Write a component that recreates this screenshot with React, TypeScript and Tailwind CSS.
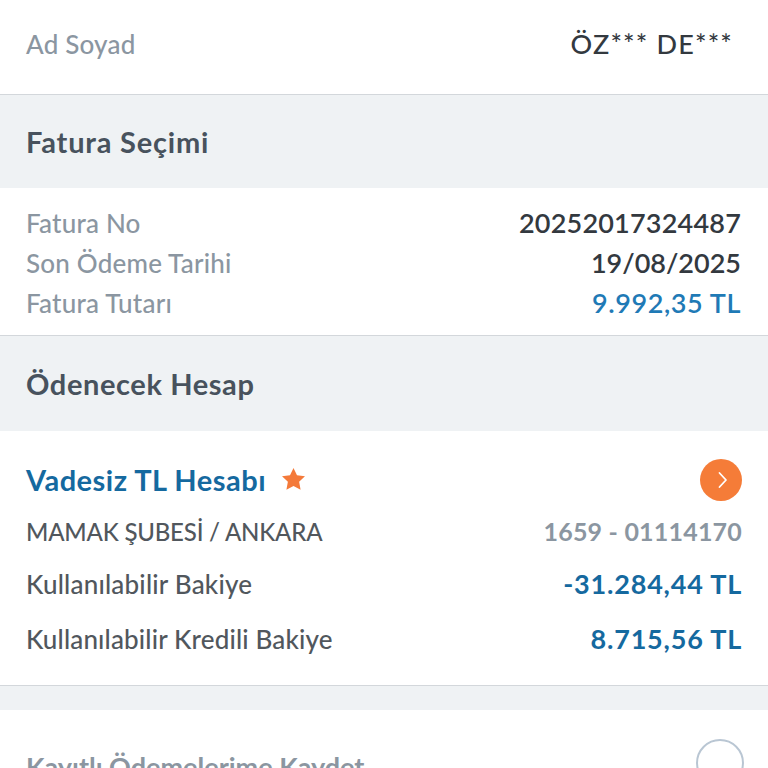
export default function App() {
  return (
    <div className="min-h-[768px] w-full bg-white font-['Lato',sans-serif]">
      {/* customer */}
      <div className="flex h-[95px] items-center justify-between border-b border-[#d3d7db] pb-[5px] pl-[26px] pr-[35px]">
        <span className="text-[26px] font-medium tracking-[0.2px] text-[#8b96a1]">Ad Soyad</span>
        <span className="text-[27px] font-medium tracking-[1.2px] text-[#33393f]">ÖZ*** DE***</span>
      </div>

      {/* invoice */}
      <div className="flex h-[93px] items-center bg-[#eff2f4] px-[26px]">
        <h2 className="text-[29px] font-bold tracking-[0.8px] text-[#48525d]">Fatura Seçimi</h2>
      </div>
      <div className="border-b border-[#d3d7db] pt-[15px] pb-[12px] pl-[26px] pr-[27px]">
        <div className="flex h-[40px] items-center justify-between">
          <span className="text-[26px] font-medium tracking-[0.2px] text-[#8b96a1]">Fatura No</span>
          <span className="text-[27px] font-semibold tracking-[0.2px] text-[#33393f]">20252017324487</span>
        </div>
        <div className="flex h-[40px] items-center justify-between">
          <span className="text-[26px] font-medium tracking-[0.2px] text-[#8b96a1]">Son Ödeme Tarihi</span>
          <span className="text-[27px] font-semibold text-[#33393f]">19/08/2025</span>
        </div>
        <div className="flex h-[40px] items-center justify-between">
          <span className="text-[26px] font-medium tracking-[0.2px] text-[#8b96a1]">Fatura Tutarı</span>
          <span className="text-[27px] font-semibold tracking-[0.6px] text-[#1f7ab6]">9.992,35 TL</span>
        </div>
      </div>

      {/* account */}
      <div className="flex h-[95px] items-center bg-[#eff2f4] px-[26px]">
        <h2 className="text-[29px] font-bold tracking-[0.6px] text-[#48525d]">Ödenecek Hesap</h2>
      </div>
      <div className="border-b border-[#d3d7db] pt-[28px] pb-[31px] pl-[26px] pr-[26px]">
        <div className="flex h-[42px] items-center justify-between">
          <div className="flex items-center gap-[14px]">
            <span className="text-[29px] font-bold tracking-[0.5px] text-[#15699f]">Vadesiz TL Hesabı</span>
            <svg width="27" height="27" viewBox="0 0 24 24" className="-mt-[2px]">
              <path
                d="M12 1.8l3.1 6.5 7.1.9-5.2 4.9 1.3 7.1L12 17.8l-6.3 3.4 1.3-7.1L1.8 9.2l7.1-.9z"
                fill="#f47a3a"
              />
            </svg>
          </div>
          <button className="flex h-[42px] w-[42px] items-center justify-center rounded-full bg-[#f57c38]">
            <svg width="24" height="24" viewBox="0 0 24 24" fill="none" className="ml-[2px]">
              <path d="M9.5 5l6.5 7-6.5 7" stroke="#fff" strokeWidth="1.8" strokeLinecap="round" strokeLinejoin="round" />
            </svg>
          </button>
        </div>
        <div className="mt-[16px] flex h-[30px] items-center justify-between">
          <span className="text-[24px] font-medium tracking-[-0.2px] text-[#51575d]">MAMAK ŞUBESİ / ANKARA</span>
          <span className="text-[25px] font-bold tracking-[0.2px] text-[#8b96a1]">1659 - 01114170</span>
        </div>
        <div className="mt-[22px] flex h-[30px] items-center justify-between">
          <span className="text-[26px] font-medium tracking-[0.2px] text-[#51575d]">Kullanılabilir Bakiye</span>
          <span className="text-[27px] font-bold tracking-[0.8px] text-[#15699f]">-31.284,44 TL</span>
        </div>
        <div className="mt-[25px] flex h-[30px] items-center justify-between">
          <span className="text-[26px] font-medium tracking-[0.15px] text-[#51575d]">Kullanılabilir Kredili Bakiye</span>
          <span className="text-[27px] font-bold tracking-[0.8px] text-[#15699f]">8.715,56 TL</span>
        </div>
      </div>

      <div className="h-[24px] bg-[#eff2f4]" />

      {/* save option */}
      <div className="flex items-center justify-between pt-[29px] pl-[26px] pr-[24px] pb-[20px]">
        <span className="mt-[8px] text-[27px] font-bold text-[#8b96a1]">Kayıtlı Ödemelerime Kaydet</span>
        <span className="h-[48px] w-[48px] rounded-full border-[2px] border-[#b9c6d3]" />
      </div>
    </div>
  );
}
